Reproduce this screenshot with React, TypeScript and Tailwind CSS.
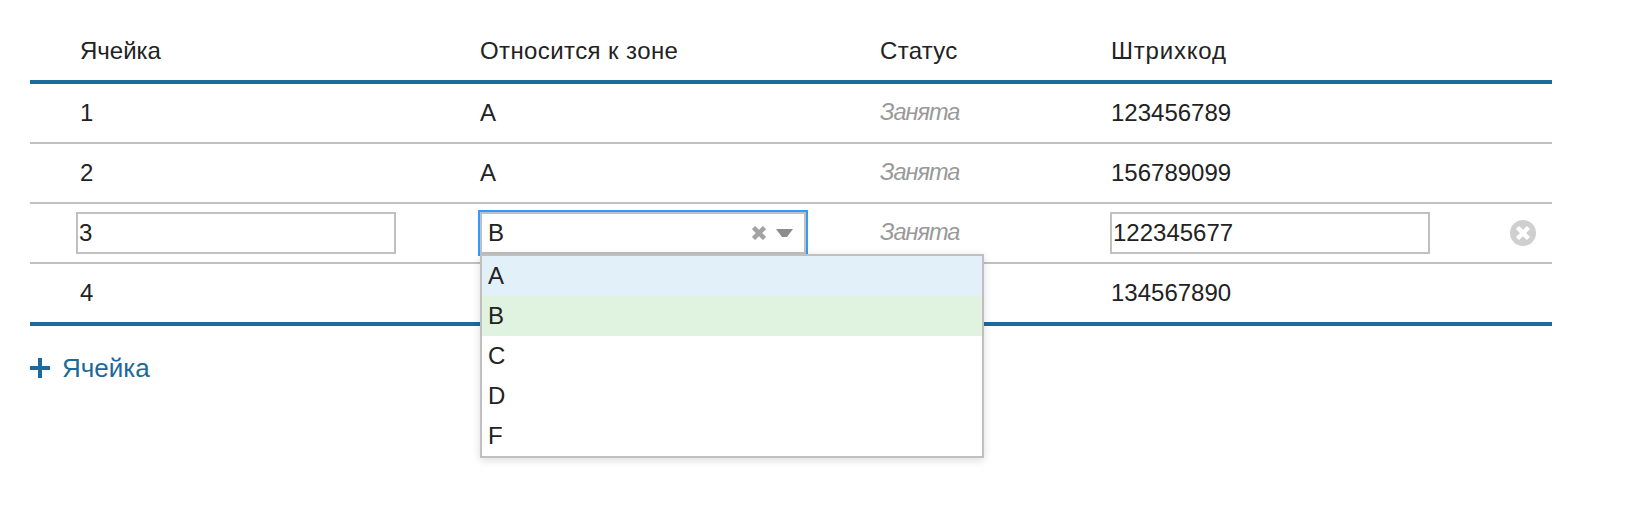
const rows = [
  { id: "1", zone: "A", code: "123456789" },
  { id: "2", zone: "A", code: "156789099" },
  { id: "3", zone: "B", code: "122345677", edit: true },
  { id: "4", zone: "", code: "134567890" },
];

const grid = "grid grid-cols-[400px_400px_234px_1fr] pl-[46px]";

function ZoneSelect({ value }: { value: string }) {
  return (
    <div className="relative ml-[2px] h-[46px] w-[330px] border-2 border-b-0 border-[#3399ff]">
      <div className="flex h-[42px] w-[326px] items-center border-2 border-[#c0c0c0] bg-white pl-[6px] pr-[11px]">
        <span className="flex-1 -mt-[1px]">{value}</span>
        <svg width="14" height="14" viewBox="0 0 14 14" className="mr-[10px] blur-[0.5px]">
          <path d="M1.5 1.5 L12.5 12.5 M12.5 1.5 L1.5 12.5" stroke="#a3a3a3" strokeWidth="4.5" />
        </svg>
        <svg width="17" height="8" viewBox="0 0 17 8" className="blur-[0.4px]">
          <path d="M0 0 H17 L11 8 H6 Z" fill="#8c8c8c" />
        </svg>
      </div>
      <ul className="absolute left-0 top-[42px] z-10 w-[504px] border-2 border-[#c0c0c0] bg-white shadow-[0_2px_8px_rgba(0,0,0,0.15)]">
        {["A", "B", "C", "D", "F"].map((o) => (
          <li
            key={o}
            className={
              "flex h-[40px] items-center pl-[6px] " +
              (o === "A" ? "bg-[#e2f0fa]" : o === "B" ? "bg-[#e0f2e0]" : "bg-white")
            }
          >
            {o}
          </li>
        ))}
      </ul>
    </div>
  );
}

function TextBox({ value }: { value: string }) {
  return (
    <input
      readOnly
      value={value}
      className="block h-[42px] w-[320px] border-2 border-[#c0c0c0] bg-white px-[1px] text-[#222] outline-none"
    />
  );
}

export default function App() {
  return (
    <div className="h-[510px] w-[1630px] bg-white pl-[30px] text-[24px] text-[#222] font-['Liberation_Sans',Arial,sans-serif]">
      <div className="w-[1522px]">
        <div className={grid + " h-[84px] items-center border-b-4 border-[#1b6a9b] pt-[22px]"}>
          <div className="pl-1">Ячейка</div>
          <div className="pl-1 tracking-[0.4px]">Относится к зоне</div>
          <div className="pl-1 tracking-[0.3px]">Статус</div>
          <div className="pl-[1px] tracking-[0.8px]">Штрихкод</div>
        </div>
        {rows.map((r, i) => (
          <div
            key={r.id}
            className={
              grid +
              " relative items-center " +
              (i === rows.length - 1
                ? "h-[62px] border-b-4 border-[#1b6a9b]"
                : "h-[60px] border-b-2 border-[#c0c0c0]")
            }
          >
            <div className={r.edit ? "" : "pl-1"}>{r.edit ? <TextBox value={r.id} /> : r.id}</div>
            <div className={r.edit ? "" : "pl-1"}>{r.edit ? <ZoneSelect value={r.zone} /> : r.zone}</div>
            <div className="pl-1 text-[23.5px] italic tracking-[-1px] text-[#999]">Занята</div>
            <div className="flex items-center justify-between pr-[16px]">
              {r.edit ? <TextBox value={r.code} /> : <span className="pl-[1px]">{r.code}</span>}
              {r.edit && (
                <svg width="26" height="26" viewBox="0 0 26 26" className="blur-[0.6px]">
                  <circle cx="13" cy="13" r="13" fill="#cfcfcf" />
                  <path d="M7.5 7.5 L18.5 18.5 M18.5 7.5 L7.5 18.5" stroke="#fff" strokeWidth="4.5" />
                </svg>
              )}
            </div>
          </div>
        ))}
        <a className="mt-[26px] flex h-[32px] items-center gap-[12px] text-[26px] leading-[32px] text-[#1b6a9b]">
          <svg width="20" height="20" viewBox="0 0 20 20">
            <path d="M8 0 H12 V8 H20 V12 H12 V20 H8 V12 H0 V8 H8 Z" fill="#1b6a9b" />
          </svg>
          Ячейка
        </a>
      </div>
    </div>
  );
}
